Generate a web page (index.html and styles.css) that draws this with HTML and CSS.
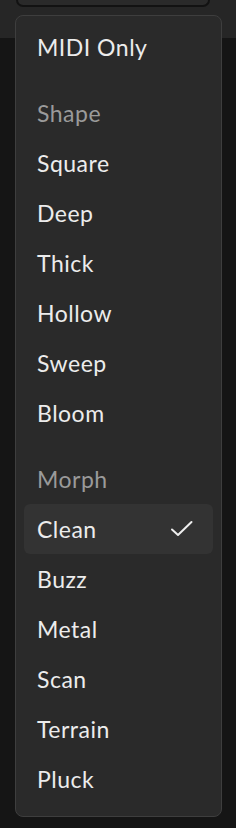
FILE: index.html
```html
<!DOCTYPE html>
<html lang="en">
<head>
    <meta charset="UTF-8">
    <title>Menu</title>
    <link rel="stylesheet" href="styles.css">
</head>
<body>
    <div class="topbar"></div>

    <div class="menu">
        <div class="item">MIDI Only</div>

        <div class="header">Shape</div>
        <div class="item">Square</div>
        <div class="item">Deep</div>
        <div class="item">Thick</div>
        <div class="item">Hollow</div>
        <div class="item">Sweep</div>
        <div class="item">Bloom</div>

        <div class="header">Morph</div>
        <div class="item selected">
            <span>Clean</span>
            <svg class="check" width="24" height="24" viewBox="0 0 24 24">
                <path d="M2 12.5l6 5.5L21.5 5" fill="none" stroke="#eeeeee" stroke-width="2" stroke-linecap="round" stroke-linejoin="round"/>
            </svg>
        </div>
        <div class="item">Buzz</div>
        <div class="item">Metal</div>
        <div class="item">Scan</div>
        <div class="item">Terrain</div>
        <div class="item">Pluck</div>
    </div>
</body>
</html>
```

FILE: styles.css
```css
* {
    box-sizing: border-box;
    margin: 0;
    padding: 0;
}

body {
    font-family: 'Lato', sans-serif;
    background: linear-gradient(#262626 0, #262626 38px, #151515 38px);
    height: 828px;
}

.topbar {
    margin-left: 16px;
    width: 194px;
    height: 7px;
    background-color: #2a2a2a;
    border: 2px solid #121212;
    border-top: none;
    border-radius: 0 0 7px 7px;
}

.menu {
    margin: 8px 0 0 15px;
    width: 207px;
    background-color: #2a2a2a;
    border: 1.5px solid #3e3e3e;
    border-radius: 8px;
    padding: 6px 8px 12px;
}

.item, .header {
    height: 50px;
    display: flex;
    align-items: center;
    justify-content: space-between;
    padding: 0 19px 0 13px;
    font-size: 23px;
    letter-spacing: 0.5px;
    color: #ececec;
    border-radius: 6px;
}

.header {
    margin-top: 16px;
    color: #9a9a9a;
}

.item.selected {
    background-color: #333333;
}

.check {
    display: block;
}
```
